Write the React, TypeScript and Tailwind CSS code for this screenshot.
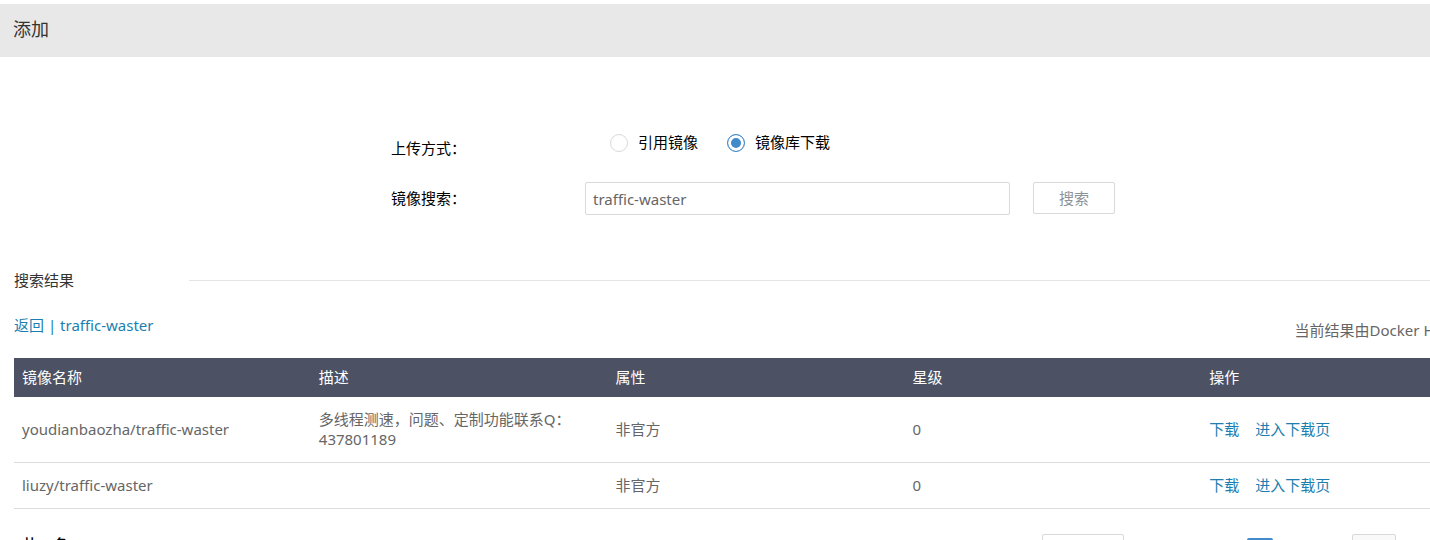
import { useState } from "react";

interface ImageResult {
  name: string;
  description: string;
  type: string;
  stars: number;
}

const results: ImageResult[] = [
  {
    name: "youdianbaozha/traffic-waster",
    description: "多线程测速，问题、定制功能联系Q：437801189",
    type: "非官方",
    stars: 0,
  },
  {
    name: "liuzy/traffic-waster",
    description: "",
    type: "非官方",
    stars: 0,
  },
];

const columns = ["镜像名称", "描述", "属性", "星级", "操作"];

const uploadModes = [
  { value: "reference", label: "引用镜像" },
  { value: "registry", label: "镜像库下载" },
];

function UploadForm() {
  const [mode, setMode] = useState("registry");
  const [keyword, setKeyword] = useState("traffic-waster");

  return (
    <form
      className="mx-auto w-[724px] pt-[69px] text-black"
      onSubmit={(e) => e.preventDefault()}
    >
      <div
        role="radiogroup"
        aria-labelledby="upload-mode"
        className="flex items-start"
      >
        <span id="upload-mode" className="w-[194px] shrink-0 pt-3">
          上传方式：
        </span>
        <div className="flex gap-[29px] pt-1.5 pl-[25px]">
          {uploadModes.map((m) => (
            <label key={m.value} className="flex items-end gap-2.5">
              <input
                type="radio"
                name="mode"
                value={m.value}
                checked={mode === m.value}
                onChange={() => setMode(m.value)}
                className="size-[18px] appearance-none rounded-full border border-[#d9d9d9] bg-white checked:border-[#428bca] checked:bg-[#428bca] checked:shadow-[inset_0_0_0_3px_white]"
              />
              {m.label}
            </label>
          ))}
        </div>
      </div>

      <div className="mt-6 flex items-start">
        <label htmlFor="keyword" className="w-[194px] shrink-0 leading-8">
          镜像搜索：
        </label>
        <input
          id="keyword"
          type="text"
          value={keyword}
          onChange={(e) => setKeyword(e.target.value)}
          className="h-[33px] min-w-0 flex-1 rounded-xs border border-[#d9d9d9] px-[7px] text-[#666]"
        />
        <button
          type="submit"
          className="ml-[23px] h-8 w-[82px] rounded-xs border border-[#d9d9d9] text-[#8c9299]"
        >
          搜索
        </button>
      </div>
    </form>
  );
}

function ResultTable() {
  return (
    <table className="mt-[18px] w-full table-fixed border-collapse text-left text-[#666]">
      <thead>
        <tr className="bg-[#4c5264] text-white">
          {columns.map((c) => (
            <th key={c} className="px-2 pt-[9px] pb-2.5 font-normal">
              {c}
            </th>
          ))}
        </tr>
      </thead>
      <tbody>
        {results.map((r) => (
          <tr key={r.name} className="border-b border-[#ddd]">
            <td className="px-2 pt-3 pb-[13px]">{r.name}</td>
            <td className="px-2 pt-3 pb-[13px]">{r.description}</td>
            <td className="px-2 pt-3 pb-[13px]">{r.type}</td>
            <td className="px-2 pt-3 pb-[13px]">{r.stars}</td>
            <td className="px-2 pt-3 pb-[13px] text-[#1c7fb0]">
              <a href="#download">下载</a>
              <a href="#page" className="ml-4">
                进入下载页
              </a>
            </td>
          </tr>
        ))}
      </tbody>
    </table>
  );
}

function Pagination() {
  return (
    <div className="flex items-start pt-[25px] pr-[102px] pl-2">
      <span className="mr-auto font-medium text-black">共 2 条</span>
      <select
        aria-label="每页条数"
        className="h-[34px] w-[82px] appearance-none rounded-xs border border-[#d9d9d9] bg-white px-2"
      >
        <option>10</option>
        <option>20</option>
      </select>
      <button
        type="button"
        className="mt-1 mr-[79px] ml-[123px] size-[26px] rounded-xs bg-[#428bca] text-white"
      >
        1
      </button>
      <input
        type="text"
        aria-label="页码"
        className="h-[34px] w-11 rounded-xs border border-[#d9d9d9] bg-[#f9f9f9]"
      />
    </div>
  );
}

export default function App() {
  return (
    <div className="h-screen overflow-hidden bg-white font-['Noto_Sans','Noto_Sans_CJK_SC',sans-serif] text-[15px] leading-5 text-[#333]">
      <div className="min-w-[1506px] pt-1">
        <header className="bg-[#e8e8e8] px-[13px] pt-[13px] pb-4">
          <h1 className="text-lg leading-6">添加</h1>
        </header>

        <UploadForm />

        <section className="pt-[55px] pr-2 pl-3.5">
          <div className="flex items-center">
            <h2 className="w-[175px]">搜索结果</h2>
            <hr className="flex-1 border-[#e5e5e5]" />
          </div>

          <div className="mt-[25px] flex items-start justify-between">
            <p className="text-[#1c7fb0]">
              <a href="#back">返回</a> | <a href="#keyword">traffic-waster</a>
            </p>
            <p className="pt-[5px] text-[#666]">当前结果由Docker Hub提供。</p>
          </div>

          <ResultTable />
          <Pagination />
        </section>
      </div>
    </div>
  );
}
